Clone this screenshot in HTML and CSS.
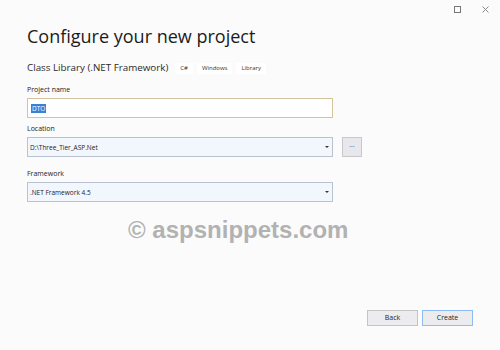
FILE: index.html
```html
<!DOCTYPE html>
<html>
<head>
<meta charset="utf-8">
<link rel="stylesheet" href="styles.css">
</head>
<body>
<div class="window">
  <div class="titlebar">
    <span class="ctl max"></span>
    <svg class="ctl close" width="7" height="7" viewBox="0 0 7 7"><path d="M0.5 0.5L6.5 6.5M6.5 0.5L0.5 6.5" stroke="#8a8a8a" stroke-width="1" fill="none"/></svg>
  </div>
  <div class="content">
    <h1 class="title">Configure your new project</h1>
    <div class="subrow">
      <span class="subtitle">Class Library (.NET Framework)</span>
      <span class="tag">C#</span>
      <span class="tag">Windows</span>
      <span class="tag">Library</span>
    </div>
    <div class="label l-name">Project name</div>
    <div class="row">
      <div class="input"><span class="sel">DTO</span></div>
    </div>
    <div class="label l-loc">Location</div>
    <div class="row">
      <div class="combo"><span>D:\Three_Tier_ASP.Net</span><span class="arrow"></span></div>
      <div class="browse">...</div>
    </div>
    <div class="label l-fw">Framework</div>
    <div class="row">
      <div class="combo"><span>.NET Framework 4.5</span><span class="arrow"></span></div>
    </div>
  </div>
  <div class="footer">
    <div class="btn">Back</div>
    <div class="btn primary">Create</div>
  </div>
  <div class="watermark">© aspsnippets.com</div>
</div>
</body>
</html>
```
FILE: styles.css
```css
html, body {
  margin: 0;
  padding: 0;
  background: #fbfbfb;
}
.window {
  position: relative;
  width: 500px;
  height: 350px;
  display: flex;
  flex-direction: column;
  font-family: "Open Sans", "Noto Sans", sans-serif;
  color: #1e1e1e;
  overflow: hidden;
}
.titlebar {
  height: 18px;
  display: flex;
  justify-content: flex-end;
  align-items: flex-start;
  padding-top: 6px;
  padding-right: 11px;
  gap: 21px;
  box-sizing: border-box;
}
.ctl.max {
  width: 5px;
  height: 5px;
  border: 1px solid #777;
  display: block;
}
.ctl.close {
  display: block;
}
.content {
  padding: 0 27px;
}
.title {
  margin: 6px 0 0 0;
  font-size: 18px;
  font-weight: 400;
  line-height: 24px;
  color: #1b1b1b;
}
.subrow {
  display: flex;
  align-items: center;
  margin-top: 14px;
  height: 12px;
}
.subtitle {
  font-size: 9.8px;
  line-height: 12px;
  color: #2a2a2a;
  margin-right: 7px;
}
.tag {
  background: #ffffff;
  font-size: 6px;
  padding: 0 5px;
  height: 11px;
  line-height: 11px;
  margin-right: 4px;
  color: #333;
}
.label {
  font-size: 7px;
  height: 10px;
  line-height: 10px;
  color: #222;
}
.l-name {
  margin-top: 11px;
}
.l-loc {
  margin-top: 6px;
}
.l-fw {
  margin-top: 12px;
}
.row {
  display: flex;
  align-items: center;
  margin-top: 3px;
}
.input {
  width: 306px;
  height: 20px;
  box-sizing: border-box;
  border: 1px solid #d4c39c;
  background: #fff;
  display: flex;
  align-items: center;
  padding-left: 3px;
}
.sel {
  background: #3b7fd6;
  color: #fff;
  font-size: 6.5px;
  line-height: 9px;
  padding: 0 1px;
}
.combo {
  width: 306px;
  height: 20px;
  box-sizing: border-box;
  border: 1px solid #bac2d1;
  background: #f2f6fd;
  display: flex;
  align-items: center;
  justify-content: space-between;
  padding: 0 3px 0 2px;
  font-size: 6.5px;
  color: #222;
}
.arrow {
  width: 0;
  height: 0;
  border-left: 2px solid transparent;
  border-right: 2px solid transparent;
  border-top: 2px solid #333;
}
.browse {
  width: 20px;
  height: 20px;
  box-sizing: border-box;
  border: 1px solid #c8c8cc;
  background: #e8e8ec;
  margin-left: 9px;
  font-size: 7px;
  line-height: 14px;
  text-align: center;
  color: #555;
}
.footer {
  margin-top: auto;
  display: flex;
  justify-content: flex-end;
  gap: 4px;
  padding: 0 27px 24px 0;
}
.btn {
  width: 51px;
  height: 16px;
  box-sizing: border-box;
  border: 1px solid #c4c4c6;
  background: #ececef;
  font-size: 7px;
  line-height: 14px;
  text-align: center;
  color: #222;
}
.btn.primary {
  border-color: #8ebcf2;
}
.watermark {
  position: absolute;
  left: 128px;
  top: 216px;
  font-family: "Liberation Sans", Arial, sans-serif;
  font-weight: 700;
  font-size: 24px;
  line-height: 28px;
  color: #b2b2b2;
}
```
